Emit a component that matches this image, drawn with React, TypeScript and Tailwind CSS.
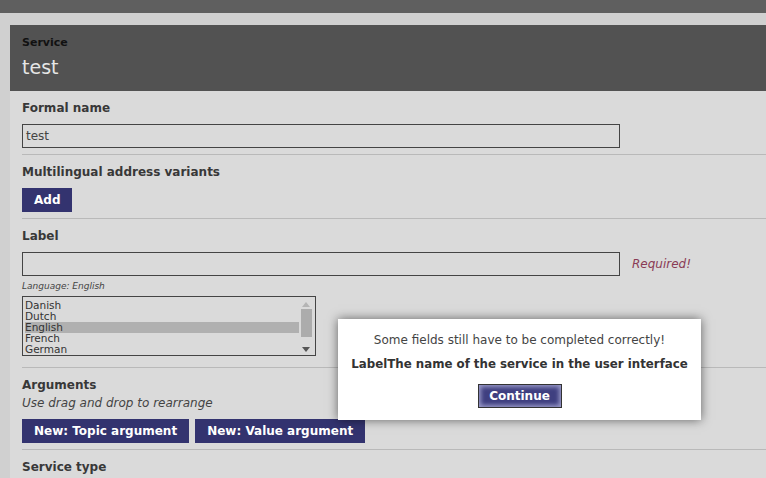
import React from "react";

const languages = ["Danish", "Dutch", "English", "French", "German"];

function Section({ children, last = false }: { children: React.ReactNode; last?: boolean }) {
  return (
    <div className={`ml-[12px] pt-[9px] ${last ? "" : "border-b border-[#b9b9b9]"}`}>
      {children}
    </div>
  );
}

function Heading({ children }: { children: React.ReactNode }) {
  return <div className="h-[17px] text-[12px] leading-[17px] font-bold text-[#383838]">{children}</div>;
}

function Button({ children }: { children: React.ReactNode }) {
  return (
    <button className="h-[24px] bg-[#33336f] px-[12px] text-[12px] font-bold leading-[24px] text-white">
      {children}
    </button>
  );
}

export default function App() {
  return (
    <div className="relative min-h-screen overflow-hidden bg-[#d0d0d0] font-['DejaVu_Sans',sans-serif]">
      <div className="h-[13px] bg-[#5f5f5f]" />
      <div className="ml-[10px] mt-[12px] h-[460px] bg-[#dadada]">
        <div className="h-[66px] bg-[#525252] px-[12px] pt-[11px]">
          <div className="text-[11px] leading-[14px] font-bold text-[#111]">Service</div>
          <div className="mt-[5px] text-[19px] leading-[24px] text-[#e6e6e6]">test</div>
        </div>

        <Section>
          <Heading>Formal name</Heading>
          <div className="mb-[6px] mt-[7px] flex h-[24px] w-[598px] items-center border border-[#444] px-[3px] text-[12px] text-[#444]">
            test
          </div>
        </Section>

        <Section>
          <Heading>Multilingual address variants</Heading>
          <div className="mb-[6px] mt-[7px] flex">
            <Button>Add</Button>
          </div>
        </Section>

        <Section>
          <Heading>Label</Heading>
          <div className="mt-[7px] flex items-center">
            <div className="h-[24px] w-[598px] border border-[#444]" />
            <span className="ml-[12px] text-[12px] italic text-[#8a3b55]">Required!</span>
          </div>
          <div className="h-[20px] text-[9px] leading-[20px] italic text-[#444]">Language: English</div>
          <div className="mb-[11px] flex h-[60px] w-[294px] border border-[#444]">
            <div className="flex-1 pl-[2px] pt-[3px]">
              {languages.map((l) => (
                <div
                  key={l}
                  className={`h-[11px] text-[10.5px] leading-[11px] text-[#333] ${l === "English" ? "bg-[#b0b0b0]" : ""}`}
                >
                  {l}
                </div>
              ))}
            </div>
            <div className="flex w-[16px] flex-col items-center pr-[2px] pt-[5px] pb-[3px]">
              <svg width="8" height="5" viewBox="0 0 8 5">
                <path d="M0 5 L4 0 L8 5 Z" fill="#b4b4b4" />
              </svg>
              <div className="mt-[2px] h-[28px] w-[11px] bg-[#acacac]" />
              <div className="flex-1" />
              <svg width="8" height="5" viewBox="0 0 8 5">
                <path d="M0 0 L8 0 L4 5 Z" fill="#555" />
              </svg>
            </div>
          </div>
        </Section>

        <Section>
          <Heading>Arguments</Heading>
          <div className="h-[18px] text-[12px] leading-[18px] italic text-[#444]">Use drag and drop to rearrange</div>
          <div className="mb-[6px] mt-[7px] flex gap-[6px]">
            <Button>New: Topic argument</Button>
            <Button>New: Value argument</Button>
          </div>
        </Section>

        <Section last>
          <Heading>Service type</Heading>
        </Section>
      </div>

      <div className="absolute left-[338px] top-[319px] flex h-[101px] w-[363px] flex-col items-center bg-white shadow-[0_0_10px_rgba(0,0,0,0.55)]">
        <div className="mt-[13px] text-[12px] leading-[16px] text-[#444]">
          Some fields still have to be completed correctly!
        </div>
        <div className="mt-[8px] text-[11.8px] leading-[16px] font-bold text-[#333]">
          LabelThe name of the service in the user interface
        </div>
        <button className="mt-[12px] h-[24px] w-[84px] border border-[#333] bg-[#3f3f80] text-[12px] font-bold text-white shadow-[inset_0_0_4px_2px_#9a9ac8]">
          Continue
        </button>
      </div>
    </div>
  );
}
